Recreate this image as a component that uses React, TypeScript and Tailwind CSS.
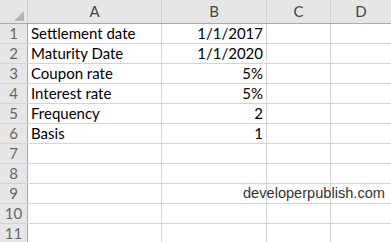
import React from "react";

const rows: [string, string][] = [
  ["Settlement date", "1/1/2017"],
  ["Maturity Date", "1/1/2020"],
  ["Coupon rate", "5%"],
  ["Interest rate", "5%"],
  ["Frequency", "2"],
  ["Basis", "1"],
  ["", ""],
  ["", ""],
  ["", ""],
  ["", ""],
  ["", ""],
];

const cols = "grid grid-cols-[28px_134px_105px_64px_1fr]";

export default function App() {
  return (
    <div className="w-[391px] h-[242px] overflow-hidden bg-white font-['Lato',sans-serif]">
      <div className={`${cols} h-[24px] bg-[#e6e6e6] border-b border-[#ababab] text-[15px] text-[#444]`}>
        <div className="relative border-r border-[#d0d0d0]">
          <svg className="absolute right-[3px] bottom-[2px]" width="10" height="10" viewBox="0 0 10 10">
            <polygon points="10,0 10,10 0,10" fill="#b4b4b4" />
          </svg>
        </div>
        <div className="flex items-center justify-center border-r border-[#d0d0d0]">A</div>
        <div className="flex items-center justify-center border-r border-[#d0d0d0]">B</div>
        <div className="flex items-center justify-center border-r border-[#d0d0d0]">C</div>
        <div className="flex items-center justify-center">D</div>
      </div>
      {rows.map(([a, b], i) => (
        <div key={i} className={`${cols} h-[20px] border-b border-[#d4d4d4] text-[15px] leading-[19px]`}>
          <div className="bg-[#e6e6e6] border-r border-[#ababab] text-center text-[#666]">{i + 1}</div>
          <div className="border-r border-[#d4d4d4] pl-[3px] text-black">{a}</div>
          <div className="relative border-r border-[#d4d4d4] pr-[3px] text-right text-black">
            {b}
            {i === 8 && (
              <span className="absolute left-[81px] top-0 whitespace-nowrap font-['Liberation_Sans',sans-serif] text-[14.6px] text-[#333] leading-[19px]">
                developerpublish.com
              </span>
            )}
          </div>
          <div className="border-r border-[#d4d4d4]"></div>
          <div></div>
        </div>
      ))}
    </div>
  );
}
